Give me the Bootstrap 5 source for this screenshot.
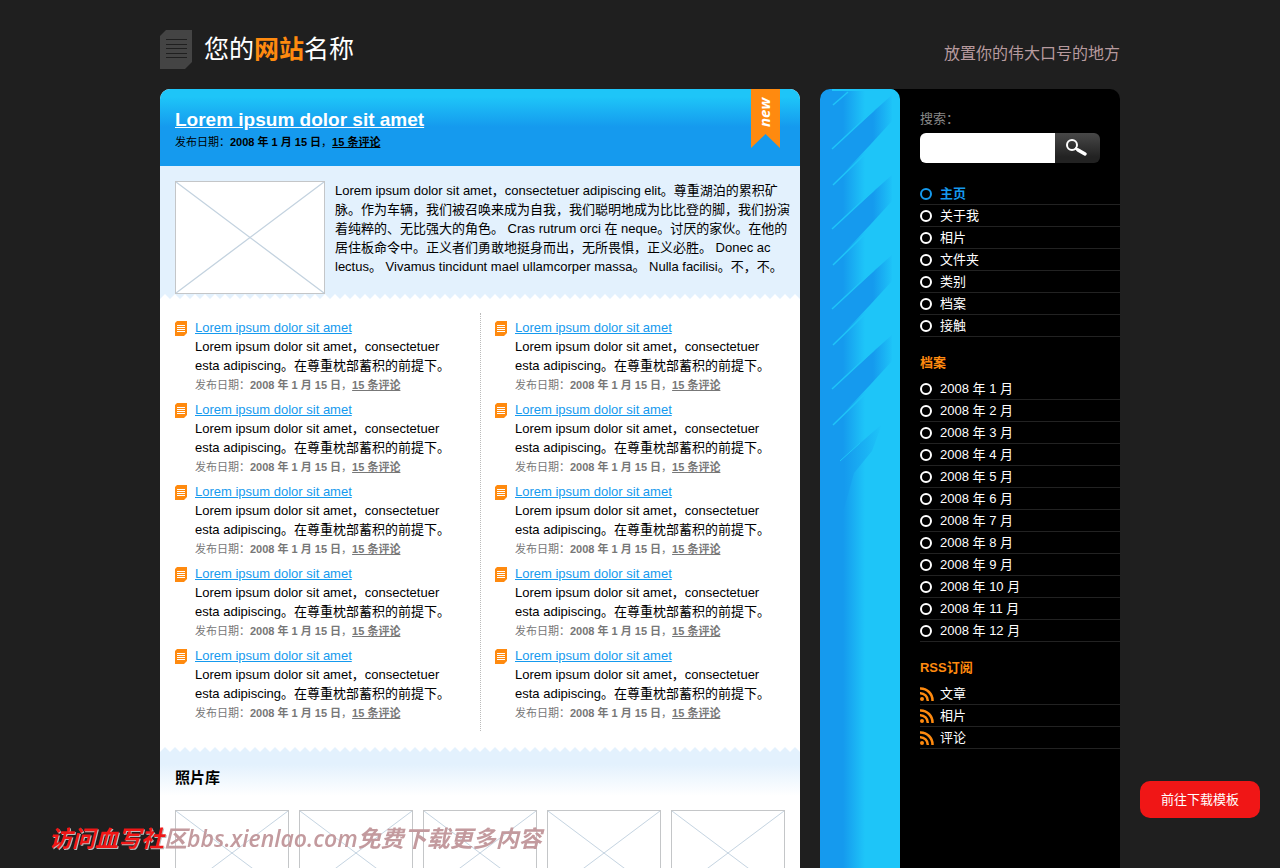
<!DOCTYPE html>
<html lang="zh-CN">
<head>
<meta charset="utf-8">
<meta name="viewport" content="width=device-width, initial-scale=1">
<title>您的网站名称</title>
<link href="https://cdn.jsdelivr.net/npm/bootstrap@5.3.0/dist/css/bootstrap.min.css" rel="stylesheet">
<style>
  :root { --sky: #1ec5f8; --blue: #159aee; --pale: #e3f1fd; --flame: #ff8a0f; }
  body { background: #1f1f1f; color: #000; font: 13px/19px "Liberation Sans", "Noto Sans CJK SC", sans-serif; }
  .site { max-width: 960px; }
  .masthead { height: 89px; }
  .site-name { font-size: 25px; line-height: 30px; margin: 6px 0 0 12px; }
  .site-name b { color: var(--flame); }
  .tagline { font-size: 16px; color: #b79a9e; margin-top: 18px; }
  .main-col { border-radius: 10px 10px 0 0; }
  .hero { background: linear-gradient(var(--sky) 8px, var(--blue) 38px); border-radius: 10px 10px 0 0; padding: 18px 15px 14px; }
  .hero h1 { font-size: 19px; line-height: 26px; font-weight: 700; margin: 0; }
  .byline { font-size: 11px; line-height: 19px; }
  .byline a { color: inherit; font-weight: 700; }
  .ribbon { top: 0; right: 20px; }
  .feature { background: var(--pale); padding: 15px 10px 0 15px; gap: 10px; }
  .feature svg { width: 150px; height: 113px; }
  .feature p { margin-right: -8px; }
  .zigzag { height: 5px; }
  .boxed { background: #fff; border: 1px solid #c4c6c8; }
  .posts { padding-top: 14px; }
  .posts > div { padding: 5px 15px 3px; }
  .posts > div + div { padding-left: 14px; border-left: 1px dotted #bbb; }
  .post { margin-bottom: 6px; gap: 8px; }
  .post svg { margin-top: 3px; }
  .post h3 { font-size: 13px; line-height: 19px; margin: 0; font-weight: 400; }
  .post h3 a { color: var(--blue); }
  .post .byline { color: #777; line-height: 20px; margin-bottom: -1px; }
  .post-text { max-width: 255px; }
  .gallery { background: linear-gradient(var(--pale) 12px, #fff 44px); padding: 15px 15px 30px; }
  .gallery h2 { font-size: 15px; line-height: 22px; font-weight: 700; margin: 0 0 21px; }
  .gallery svg { aspect-ratio: 114 / 86; min-width: 0; }
  .side { background: #000; border-radius: 10px; }
  .stripe { width: 80px; border-radius: 10px 10px 0 0; background: linear-gradient(90deg, var(--blue) 23px, var(--sky) 45px); }
  .menu { padding: 20px 0 20px 20px; color: #fff; }
  .menu label { color: #888; margin-bottom: 5px; }
  .search { height: 30px; margin: 0 20px 20px 0; }
  .search input { border-radius: 6px 0 0 6px; border: 0; min-width: 0; padding: 4px 8px; font-size: 13px; }
  .search button { width: 45px; border: 0; border-radius: 0 6px 6px 0; background: linear-gradient(#484848, #222 24px); }
  .menu a { display: flex; align-items: center; gap: 8px; height: 22px; color: #fff; text-decoration: none; border-bottom: 1px solid #222; }
  .ring a::before { content: ""; width: 12px; height: 12px; border: 2px solid currentColor; border-radius: 50%; }
  .menu .active { color: var(--blue); font-weight: 700; }
  .menu ul { margin-bottom: 16px; }
  .menu h2 { font-size: 13px; line-height: 19px; font-weight: 700; color: var(--flame); margin: 0 0 6px; }
  .menu .feed a { gap: 6px; }
  .download { right: 20px; bottom: 50px; width: 120px; height: 37px; border: 0; border-radius: 10px; background: #f01616; color: #fff; font-size: 13px; }
  .watermark { left: 49px; bottom: 15px; font: italic 600 23px/30px "Open Sans", "Noto Sans CJK SC", sans-serif; color: #c39a9e; white-space: nowrap; pointer-events: none; }
  .watermark span { color: #f01616; text-shadow: 1px 1px #bbb; }
</style>
</head>
<body>
<svg width="0" height="0" class="position-absolute" aria-hidden="true">
  <defs>
    <symbol id="sheet" viewBox="0 0 12 15"><path fill="#ff8a0f" d="M2 0h10v12l-3 3H0V2z"/><path stroke="#fff" d="M2 4.500h8M2 6.500h8M2 8.500h8M2 10.500h8"/></symbol>
    <symbol id="cross" viewBox="0 0 114 86" preserveAspectRatio="none"><path stroke="#c3d2df" fill="none" d="M0 0 114 86M114 0 0 86"/></symbol>
    <symbol id="rss" viewBox="0 0 14 14"><g fill="none" stroke="#ff8a0f" stroke-width="2.500"><path d="M0 1.500A12 12 0 0 1 12.500 14M0 6.300A7.500 7.500 0 0 1 7.800 14"/></g><circle cx="2" cy="12" r="2" fill="#ff8a0f"/></symbol>
    <pattern id="up" width="10" height="5" patternUnits="userSpaceOnUse"><path fill="#e3f1fd" d="M0 5 5 0l5 5z"/></pattern>
    <pattern id="down" width="10" height="5" patternUnits="userSpaceOnUse"><path fill="#e3f1fd" d="M0 0h10v5L5 0 0 5z"/></pattern>
  </defs>
</svg>

<div class="site container-fluid p-0">
  <header class="masthead d-flex justify-content-between">
    <div class="d-flex pt-4 mt-1 align-items-start">
      <svg width="32" height="39" viewBox="0 0 32 39" style="margin-top:2px"><path fill="#444" d="M6 0h26v32l-7 7H0V6z"/><path stroke="#1f1f1f" d="M6 9.500h21M6 14.500h21M6 18.500h21M6 23.500h21M6 27.500h21"/></svg>
      <div class="site-name text-white">您的<b>网站</b>名称</div>
    </div>
    <div class="tagline align-self-center">放置你的伟大口号的地方</div>
  </header>

  <div class="row g-0">
    <main class="main-col col-8 bg-white">
      <div class="hero position-relative">
        <h1><a href="#" class="text-white">Lorem ipsum dolor sit amet</a></h1>
        <div class="byline">发布日期：<b>2008 年 1 月 15 日</b>，<a href="#">15 条评论</a></div>
        <svg class="ribbon position-absolute" width="29" height="59"><path fill="#ff8a0f" d="M0 0h29v59L14.500 45 0 59z"/><text transform="translate(19 38) rotate(-90)" fill="#fff" font-family="Open Sans, sans-serif" font-size="15" font-weight="700" font-style="italic">new</text></svg>
      </div>
      <section class="feature d-flex">
        <svg class="boxed flex-shrink-0"><use href="#cross" width="100%" height="100%"/></svg>
        <p class="mb-0">Lorem ipsum dolor sit amet，consectetuer adipiscing elit。尊重湖泊的累积矿<br>脉。作为车辆，我们被召唤来成为自我，我们聪明地成为比比登的脚，我们扮演<br>着纯粹的、无比强大的角色。 Cras rutrum orci 在 neque。讨厌的家伙。在他的<br>居住板命令中。正义者们勇敢地挺身而出，无所畏惧，正义必胜。 Donec ac<br>lectus。 Vivamus tincidunt mael ullamcorper massa。 Nulla facilisi。不，不。</p>
      </section>
      <svg class="zigzag w-100 d-block"><rect width="100%" height="5" fill="url(#down)"/></svg>
      <section class="posts row g-0">
        <div class="col-6" data-posts></div>
        <div class="col-6" data-posts></div>
      </section>
      <svg class="zigzag w-100 d-block mt-3"><rect width="100%" height="5" fill="url(#up)"/></svg>
      <section class="gallery">
        <h2>照片库</h2>
        <div class="d-flex" style="gap:10px">
          <svg class="boxed flex-fill w-100"><use href="#cross" width="100%" height="100%"/></svg>
          <svg class="boxed flex-fill w-100"><use href="#cross" width="100%" height="100%"/></svg>
          <svg class="boxed flex-fill w-100"><use href="#cross" width="100%" height="100%"/></svg>
          <svg class="boxed flex-fill w-100"><use href="#cross" width="100%" height="100%"/></svg>
          <svg class="boxed flex-fill w-100"><use href="#cross" width="100%" height="100%"/></svg>
        </div>
      </section>
    </main>

    <div class="col-4 d-flex" style="padding-left:20px">
      <aside class="side d-flex flex-fill">
        <div class="stripe flex-shrink-0 overflow-hidden">
          <svg class="d-block" width="80" height="420">
            <defs>
              <linearGradient id="fade" gradientUnits="userSpaceOnUse" x1="53" x2="73" y1="0" y2="0"><stop stop-color="#159aee"/><stop offset="1" stop-color="#1ec5f8"/></linearGradient>
              <linearGradient id="tail" gradientUnits="userSpaceOnUse" x1="24" x2="62" y1="0" y2="0"><stop stop-color="#159aee"/><stop offset="1" stop-color="#1ec5f8"/></linearGradient>
              <g id="slash"><path fill="url(#fade)" d="M0 70 12 59 72 6v26L50 56 12 96 0 108z"/><path stroke="#1ec5f8" stroke-width="1.500" d="M12 60 54 21M13 96 45 65"/></g>
            </defs>
            <path stroke="#1ec5f8" stroke-width="1.500" d="M13 16 28 3"/><path fill="#1ec5f8" d="M12 0h68v2H12z"/>
            <use href="#slash"/><use href="#slash" y="80"/><use href="#slash" y="160"/><use href="#slash" y="240"/>
            <path fill="url(#tail)" d="M20 372 62 335 52 362 34 384 24 420H0v-48z"/><path stroke="#1ec5f8" d="M20 372 40 354"/>
          </svg>
        </div>
        <div class="menu flex-fill">
          <label for="q" class="d-block">搜索：</label>
          <form class="search d-flex">
            <input id="q" type="text" class="flex-fill w-100">
            <button type="button" class="p-0 flex-shrink-0" aria-label="搜索"><svg class="d-block" width="45" height="30"><circle cx="17" cy="12" r="5" fill="none" stroke="#fff" stroke-width="2"/><path stroke="#fff" stroke-width="2.500" d="m20 15 5 3"/><path stroke="#fff" stroke-width="3.500" stroke-linecap="round" d="m23 17 7 4"/></svg></button>
          </form>
          <ul class="ring list-unstyled">
            <li><a href="#" class="active">主页</a></li><li><a href="#">关于我</a></li><li><a href="#">相片</a></li><li><a href="#">文件夹</a></li><li><a href="#">类别</a></li><li><a href="#">档案</a></li><li><a href="#">接触</a></li>
          </ul>
          <h2>档案</h2>
          <ul class="ring list-unstyled" id="months"></ul>
          <h2>RSS订阅</h2>
          <ul class="feed list-unstyled">
            <li><a href="#"><svg width="14" height="14"><use href="#rss"/></svg>文章</a></li>
            <li><a href="#"><svg width="14" height="14"><use href="#rss"/></svg>相片</a></li>
            <li><a href="#"><svg width="14" height="14"><use href="#rss"/></svg>评论</a></li>
          </ul>
        </div>
      </aside>
    </div>
  </div>
</div>

<div class="watermark position-fixed"><span>访问血写社</span>区bbs.xienlao.com免费下载更多内容</div>
<button type="button" class="download position-fixed">前往下载模板</button>

<script>
  const post = `<article class="post d-flex">
    <svg class="flex-shrink-0" width="12" height="15"><use href="#sheet"/></svg>
    <div><h3><a href="#">Lorem ipsum dolor sit amet</a></h3>
    <div class="post-text">Lorem ipsum dolor sit amet，consectetuer esta adipiscing。在尊重枕部蓄积的前提下。</div>
    <div class="byline">发布日期：<b>2008 年 1 月 15 日</b>，<a href="#">15 条评论</a></div></div></article>`;
  document.querySelectorAll('[data-posts]').forEach(c => c.innerHTML = post.repeat(5));
  document.getElementById('months').innerHTML =
    Array.from({ length: 12 }, (_, i) => `<li><a href="#">2008 年 ${i + 1} 月</a></li>`).join('');
</script>
<script src="https://cdn.jsdelivr.net/npm/bootstrap@5.3.0/dist/js/bootstrap.bundle.min.js"></script>
</body>
</html>
